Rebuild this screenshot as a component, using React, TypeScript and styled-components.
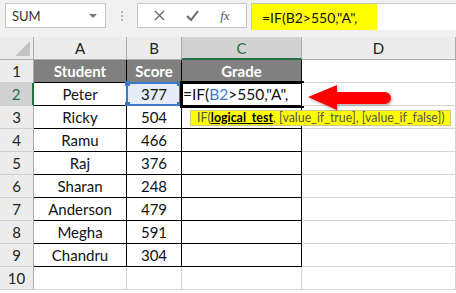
import styled, { createGlobalStyle } from "styled-components";

const GlobalStyle = createGlobalStyle`
  body {
    margin: 0;
    background: #ffffff;
    font-family: Lato, "Noto Sans", sans-serif;
    overflow: hidden;
  }
`;

const Window = styled.div`
  width: 456px;
  height: 293px;
  display: flex;
  flex-direction: column;
  background: #ffffff;
`;

const Toolbar = styled.div`
  height: 37px;
  box-sizing: border-box;
  padding: 3px 0 0 5px;
  display: flex;
  align-items: flex-start;
  background: #f1f1f1;
`;
const NameBox = styled.div`
  width: 101px;
  height: 25px;
  box-sizing: border-box;
  border: 1px solid #c6c6c6;
  background: #fff;
  display: flex;
  align-items: center;
  justify-content: space-between;
  padding: 0 8px 0 6px;
  font-size: 13px;
  color: #333;
`;
const Caret = styled.span`
  width: 0;
  height: 0;
  border-left: 4px solid transparent;
  border-right: 4px solid transparent;
  border-top: 4px solid #777;
`;
const Grip = styled.div`
  width: 31px;
  height: 25px;
  display: flex;
  justify-content: center;
  align-items: center;
  span {
    width: 2px;
    height: 10px;
    background: repeating-linear-gradient(#bbb 0 2px, transparent 2px 4px);
  }
`;
const FxButtons = styled.div`
  width: 110px;
  height: 25px;
  box-sizing: border-box;
  border: 1px solid #c6c6c6;
  background: #fff;
  display: flex;
  align-items: center;
  justify-content: space-around;
  padding: 0 6px;
  color: #6a6a6a;
`;
const FxText = styled.span`
  font-family: "Liberation Serif", serif;
  font-style: italic;
  font-size: 13px;
  color: #555;
`;
const FormulaInput = styled.div`
  flex: 1;
  height: 26px;
  margin-left: 4px;
  border-top: 1px solid #c6c6c6;
  border-left: 1px solid #c6c6c6;
  background: #fff;
  display: flex;
`;
const FormulaHighlight = styled.div`
  width: 125px;
  background: #ffff00;
  display: flex;
  align-items: center;
  padding-left: 10px;
  box-sizing: border-box;
  font-size: 14px;
  color: #111;
`;

const Sheet = styled.div`
  display: grid;
  grid-template-columns: 34px 93px 55px 120px 1fr;
  grid-auto-rows: 23px;
`;

const Corner = styled.div`
  background: #ececec;
  border-right: 1px solid #ababab;
  border-bottom: 1px solid #ababab;
  box-sizing: border-box;
  display: flex;
  align-items: flex-end;
  justify-content: flex-end;
  padding: 0 3px 3px 0;
  span {
    width: 0;
    height: 0;
    border-left: 15px solid transparent;
    border-bottom: 15px solid #c3c3c3;
  }
`;
const ColHead = styled.div<{ $active?: boolean }>`
  box-sizing: border-box;
  background: ${(p) => (p.$active ? "#d2d2d2" : "#ececec")};
  border-right: 1px solid #ababab;
  border-bottom: ${(p) => (p.$active ? "2px solid #217346" : "1px solid #ababab")};
  color: ${(p) => (p.$active ? "#217346" : "#222")};
  font-size: 15px;
  display: flex;
  align-items: center;
  justify-content: center;
`;
const RowHead = styled.div<{ $active?: boolean }>`
  box-sizing: border-box;
  background: ${(p) => (p.$active ? "#d2d2d2" : "#ececec")};
  border-right: ${(p) => (p.$active ? "2px solid #217346" : "1px solid #ababab")};
  border-bottom: 1px solid #d0d0d0;
  color: ${(p) => (p.$active ? "#217346" : "#222")};
  font-size: 15px;
  display: flex;
  align-items: center;
  justify-content: center;
`;
const Cell = styled.div<{ $boxed?: boolean; $title?: boolean }>`
  position: relative;
  box-sizing: border-box;
  border-right: 1px solid ${(p) => (p.$boxed ? "#000" : "#d4d4d4")};
  border-bottom: 1px solid ${(p) => (p.$boxed ? "#000" : "#d4d4d4")};
  background: ${(p) => (p.$title ? "#808080" : "#fff")};
  color: ${(p) => (p.$title ? "#fff" : "#111")};
  font-weight: ${(p) => (p.$title ? 700 : 400)};
  font-size: 15px;
  display: flex;
  align-items: center;
  justify-content: center;
`;
const RefCell = styled(Cell)`
  background: #e6edf8;
`;
const RefFrame = styled.div`
  position: absolute;
  inset: -1px 0 -1px -1px;
  border: 2px solid #3b78cf;
  pointer-events: none;
`;
const Handle = styled.span<{ $top: boolean; $left: boolean }>`
  position: absolute;
  width: 5px;
  height: 5px;
  background: #3b78cf;
  ${(p) => (p.$top ? "top: -3px;" : "bottom: -3px;")}
  ${(p) => (p.$left ? "left: -3px;" : "right: -3px;")}
`;
const EditCell = styled(Cell)`
  justify-content: flex-start;
  z-index: 2;
  outline: 3px solid #000;
  outline-offset: -1px;
  padding-left: 1px;
  font-size: 15.5px;
  white-space: nowrap;
`;
const RefText = styled.span`
  color: #3b78cf;
`;
const Tooltip = styled.div`
  position: absolute;
  left: 8px;
  top: 27px;
  height: 16px;
  box-sizing: border-box;
  background: #ffff00;
  border: 1px solid #c9c98a;
  font-size: 12.4px;
  line-height: 14px;
  padding: 0 5px 0 6px;
  color: #555;
  white-space: nowrap;
  b {
    color: #000;
    text-decoration: underline;
  }
`;
const ArrowCell = styled(Cell)`
  overflow: visible;
  z-index: 3;
`;
const Arrow = styled.svg`
  position: absolute;
  left: 5px;
  top: 2px;
  overflow: visible;
`;

const students: [string, number][] = [
  ["Peter", 377],
  ["Ricky", 504],
  ["Ramu", 466],
  ["Raj", 376],
  ["Sharan", 248],
  ["Anderson", 479],
  ["Megha", 591],
  ["Chandru", 304],
];

export default function App() {
  return (
    <Window>
      <GlobalStyle />
      <Toolbar>
        <NameBox>
          SUM
          <Caret />
        </NameBox>
        <Grip>
          <span />
        </Grip>
        <FxButtons>
          <svg width="11" height="11" viewBox="0 0 11 11">
            <path d="M1 1L10 10M10 1L1 10" stroke="#666" strokeWidth="1.3" />
          </svg>
          <svg width="13" height="11" viewBox="0 0 13 11">
            <path d="M1 6L5 10L12 1" stroke="#666" strokeWidth="2" fill="none" />
          </svg>
          <FxText>fx</FxText>
        </FxButtons>
        <FormulaInput>
          <FormulaHighlight>=IF(B2&gt;550,"A",</FormulaHighlight>
        </FormulaInput>
      </Toolbar>
      <Sheet>
        <Corner>
          <span />
        </Corner>
        <ColHead>A</ColHead>
        <ColHead>B</ColHead>
        <ColHead $active>C</ColHead>
        <ColHead>D</ColHead>

        <RowHead>1</RowHead>
        <Cell $boxed $title>Student</Cell>
        <Cell $boxed $title>Score</Cell>
        <Cell $boxed $title>Grade</Cell>
        <Cell />

        {students.map(([name, score], i) => {
          const row = i + 2;
          if (row === 2) {
            return [
              <RowHead key="h" $active>{row}</RowHead>,
              <Cell key="a" $boxed>{name}</Cell>,
              <RefCell key="b" $boxed>
                {score}
                <RefFrame>
                  <Handle $top $left />
                  <Handle $top $left={false} />
                  <Handle $top={false} $left />
                  <Handle $top={false} $left={false} />
                </RefFrame>
              </RefCell>,
              <EditCell key="c" $boxed>
                =IF(<RefText>B2</RefText>&gt;550,"A",
                <Tooltip>
                  IF(<b>logical_test</b>, [value_if_true], [value_if_false])
                </Tooltip>
              </EditCell>,
              <ArrowCell key="d">
                <Arrow width="84" height="28" viewBox="0 0 84 28">
                  <defs>
                    <filter id="sh" x="-10%" y="-20%" width="130%" height="160%">
                      <feDropShadow dx="1" dy="1.5" stdDeviation="1" floodColor="#000" floodOpacity="0.3" />
                    </filter>
                  </defs>
                  <path
                    d="M1 12L30 0L30 7L78 7A6 6 0 0 1 78 19L30 19L30 25Z"
                    fill="#ff0000"
                    filter="url(#sh)"
                  />
                </Arrow>
              </ArrowCell>,
            ];
          }
          return [
            <RowHead key="h">{row}</RowHead>,
            <Cell key="a" $boxed>{name}</Cell>,
            <Cell key="b" $boxed>{score}</Cell>,
            <Cell key="c" $boxed />,
            <Cell key="d" />,
          ];
        })}

        <RowHead>10</RowHead>
        <Cell />
        <Cell />
        <Cell />
        <Cell />
      </Sheet>
    </Window>
  );
}
